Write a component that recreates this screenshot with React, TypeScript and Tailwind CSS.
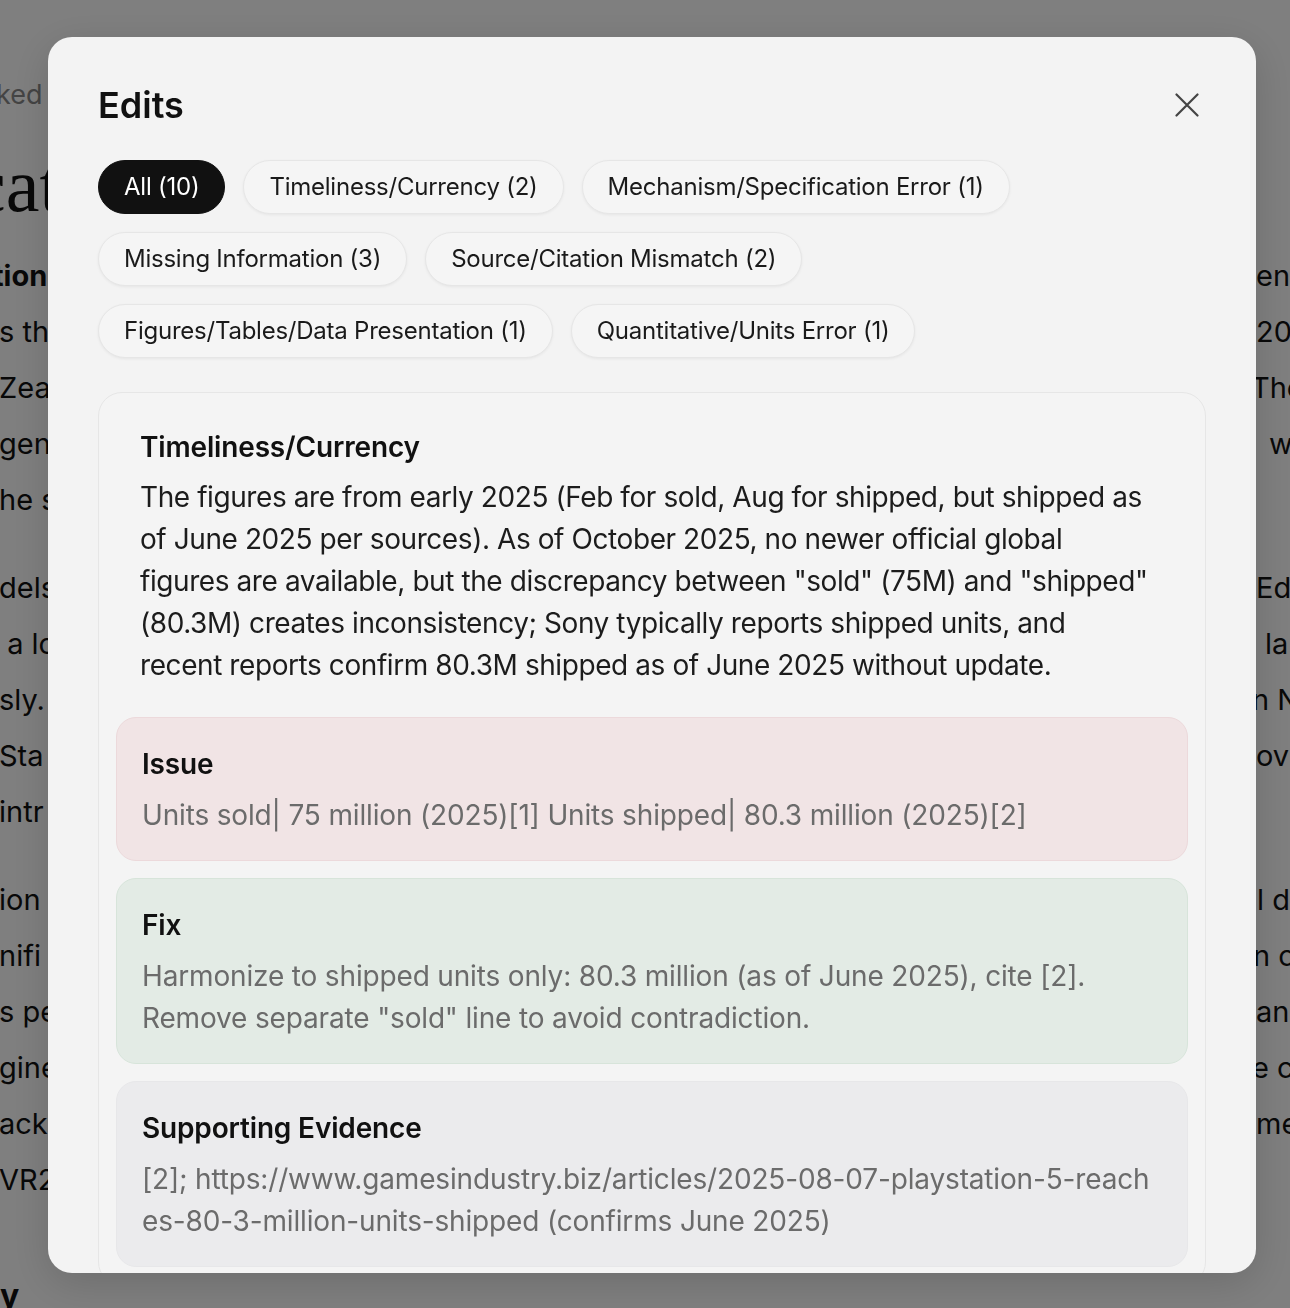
const FILTERS = [
  { label: "All (10)", active: true },
  { label: "Timeliness/Currency (2)" },
  { label: "Mechanism/Specification Error (1)" },
  { label: "Missing Information (3)" },
  { label: "Source/Citation Mismatch (2)" },
  { label: "Figures/Tables/Data Presentation (1)" },
  { label: "Quantitative/Units Error (1)" },
];

// fragments of the article that peek out around the dialog
const LINES_A = [
  { left: "s the", right: "2025", rightShift: "" },
  { left: "Zealand", right: "The", rightShift: "-ml-[5px]" },
  { left: "gency", right: "w", rightShift: "ml-[13px]" },
  { left: "he s", right: "", rightShift: "" },
];
const LINES_B = [
  { left: "dels", right: "Edition", rightShift: "" },
  { left: "\u00a0a lo", right: "la", rightShift: "ml-[9px]" },
  { left: "sly.", right: "n N", rightShift: "-ml-[4px]" },
  { left: "Sta", right: "ov", rightShift: "" },
  { left: "intr", right: "", rightShift: "" },
];
const LINES_C = [
  { left: "ion", right: "l da", rightShift: "ml-[1px]" },
  { left: "nifi", right: "n c", rightShift: "-ml-[3px]" },
  { left: "s pe", right: "and", rightShift: "" },
  { left: "gine", right: "e c", rightShift: "-ml-[4px]" },
  { left: "ack", right: "me", rightShift: "" },
  { left: "VR2", right: "", rightShift: "" },
];

const SUMMARY = [
  "The figures are from early 2025 (Feb for sold, Aug for shipped, but shipped as",
  "of June 2025 per sources). As of October 2025, no newer official global",
  'figures are available, but the discrepancy between "sold" (75M) and "shipped"',
  "(80.3M) creates inconsistency; Sony typically reports shipped units, and",
  "recent reports confirm 80.3M shipped as of June 2025 without update.",
];

function BgLine({ left, right, rightShift }: { left: string; right: string; rightShift: string }) {
  return (
    <div className="flex h-[56px] items-center justify-between overflow-hidden whitespace-nowrap text-[29px]">
      <span className="-ml-[1px]">{left}</span>
      <div className="w-[34px] overflow-hidden">
        <div className={rightShift}>{right}</div>
      </div>
    </div>
  );
}

function BackgroundPage() {
  return (
    <div className="min-h-screen overflow-hidden bg-white pt-[75px] font-['Inter',sans-serif] text-[#111]">
      <div className="-ml-[4px] h-[40px] text-[27px] leading-[40px] text-[#888]">ked</div>
      <div className="mt-[30px] -ml-[28px] h-[80px] font-['Liberation_Serif',serif] text-[76px] leading-[80px]">
        cations
      </div>
      <div className="mt-[23px] flex h-[56px] items-center justify-between overflow-hidden whitespace-nowrap text-[29px]">
        <span className="-ml-[7px] font-bold">tion</span>
        <div className="w-[34px] overflow-hidden">en</div>
      </div>
      {LINES_A.map((l, i) => (
        <BgLine key={"a" + i} {...l} />
      ))}
      <div className="mt-[32px]">
        {LINES_B.map((l, i) => (
          <BgLine key={"b" + i} {...l} />
        ))}
      </div>
      <div className="mt-[32px]">
        {LINES_C.map((l, i) => (
          <BgLine key={"c" + i} {...l} />
        ))}
      </div>
      <div className="mt-[64px] h-[56px] text-[32px] font-bold">y</div>
    </div>
  );
}

function Chip({ label, active }: { label: string; active?: boolean }) {
  return (
    <button
      className={`flex h-[54px] items-center rounded-full border px-[25px] text-[24px] tracking-[-0.01em] ${
        active
          ? "border-[#111] bg-[#111] text-white"
          : "border-[#e6e6e6] bg-[#f5f5f5] text-[#1a1a1a] shadow-[0_1px_3px_rgba(0,0,0,0.06)]"
      }`}
    >
      {label}
    </button>
  );
}

function Section({
  title,
  children,
  tone,
}: {
  title: string;
  children: React.ReactNode;
  tone: string;
}) {
  return (
    <div className={`rounded-[20px] border px-[25px] pb-[24px] pt-[28px] ${tone}`}>
      <div className="text-[28px] font-semibold leading-[36px] text-[#111]">{title}</div>
      <div className="mt-[12px] text-[28px] leading-[42px] text-[#6b6b6b]">{children}</div>
    </div>
  );
}

function EditsDialog() {
  return (
    <div className="fixed inset-0 bg-black/50 font-['Inter',sans-serif] tracking-[-0.01em]">
      <div className="ml-[48px] mt-[37px] flex h-[1236px] w-[1208px] flex-col overflow-hidden rounded-[24px] bg-[#f3f3f3] px-[50px] pt-[48px] shadow-[0_10px_40px_rgba(0,0,0,0.15)]">
        <div className="flex h-[40px] items-center justify-between">
          <h2 className="text-[36px] font-semibold leading-[40px] tracking-normal text-[#111]">Edits</h2>
          <button className="mr-[7px] text-[#444]" title="Close">
            <svg width="24" height="24" viewBox="0 0 24 24" fill="none" stroke="currentColor" strokeWidth="2.2" strokeLinecap="round">
              <path d="M1.5 1.5L22.5 22.5M22.5 1.5L1.5 22.5" />
            </svg>
          </button>
        </div>

        <div className="mt-[35px] flex flex-wrap gap-[18px]">
          {FILTERS.map((f) => (
            <Chip key={f.label} {...f} />
          ))}
        </div>

        <div className="mt-[34px] shrink-0 rounded-[24px] border border-[#e6e6e6] bg-[#f4f4f4] px-[17px] pb-[18px] pt-[36px]">
          <div className="px-[24px]">
            <div className="text-[28px] font-semibold leading-[36px] text-[#111]">Timeliness/Currency</div>
            <p className="mt-[11px] text-[28px] leading-[42px] tracking-[-0.015em] text-[#1c1c1c]">
              {SUMMARY.map((line, i) => (
                <span key={i} className="block">
                  {line}
                </span>
              ))}
            </p>
          </div>

          <div className="mt-[31px] flex flex-col gap-[17px]">
            <Section title="Issue" tone="border-[#ecd9db] bg-[#f1e4e5]">
              Units sold| 75 million (2025)[1] Units shipped| 80.3 million (2025)[2]
            </Section>
            <Section title="Fix" tone="border-[#d7e4da] bg-[#e3ebe5]">
              Harmonize to shipped units only: 80.3 million (as of June 2025), cite [2]. Remove separate "sold"
              line to avoid contradiction.
            </Section>
            <Section title="Supporting Evidence" tone="border-[#e7e7e9] bg-[#ebebed]">
              <span className="break-all">
                [2]; https://www.gamesindustry.biz/articles/2025-08-07-playstation-5-reaches-80-3-million-units-shipped
              </span>{" "}
              (confirms June 2025)
            </Section>
          </div>
        </div>
      </div>
    </div>
  );
}

export default function App() {
  return (
    <>
      <BackgroundPage />
      <EditsDialog />
    </>
  );
}
